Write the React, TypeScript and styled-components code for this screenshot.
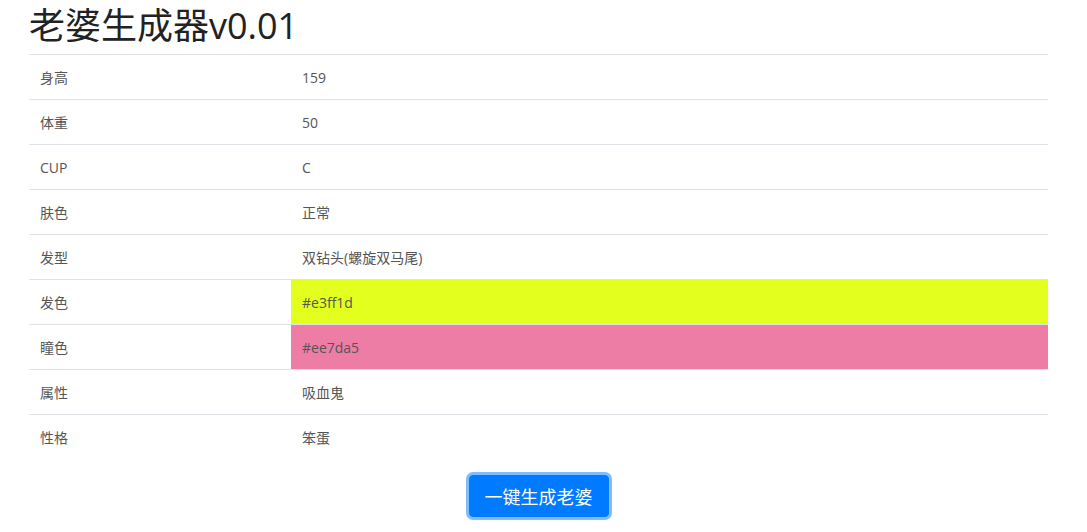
import React from "react";
import styled, { createGlobalStyle } from "styled-components";

const Global = createGlobalStyle`
  html, body { margin: 0; padding: 0; background: #fff; }
  body {
    font-family: "Open Sans", "Noto Sans CJK SC", sans-serif;
    color: #212529;
  }
`;

const Page = styled.div`
  width: 1019px;
  margin-left: 29px;
  display: flex;
  flex-direction: column;
`;

const Title = styled.h1`
  margin: 0;
  height: 54px;
  font-size: 36px;
  font-weight: 400;
  line-height: 52px;
  color: #222;
  font-family: "Open Sans", "Noto Sans CJK SC", sans-serif;
`;

const Table = styled.div`
  display: grid;
  grid-template-columns: 262px 1fr;
`;

const Cell = styled.div<{ $bg?: string }>`
  height: 45px;
  box-sizing: border-box;
  padding: 0 11px;
  display: flex;
  align-items: center;
  border-top: 1px solid #dee2e6;
  font-size: 14px;
  color: #555;
  background: ${(p) => p.$bg || "transparent"};
`;

const Footer = styled.div`
  display: flex;
  justify-content: center;
  padding-top: 13px;
`;

const Button = styled.button`
  font-family: "Noto Sans CJK SC", sans-serif;
  font-size: 18px;
  line-height: 26px;
  color: #fff;
  background: #007bff;
  border: 1px solid #007bff;
  border-radius: 4px;
  padding: 7px 15px;
  margin: 3px;
  box-shadow: 0 0 0 3px rgba(0, 123, 255, 0.5);
  cursor: pointer;
`;

const rows: { k: string; v: string; bg?: string }[] = [
  { k: "身高", v: "159" },
  { k: "体重", v: "50" },
  { k: "CUP", v: "C" },
  { k: "肤色", v: "正常" },
  { k: "发型", v: "双钻头(螺旋双马尾)" },
  { k: "发色", v: "#e3ff1d", bg: "#e3ff1d" },
  { k: "瞳色", v: "#ee7da5", bg: "#ee7da5" },
  { k: "属性", v: "吸血鬼" },
  { k: "性格", v: "笨蛋" },
];

export default function App() {
  return (
    <>
      <Global />
      <Page>
        <Title>老婆生成器v0.01</Title>
        <Table>
          {rows.map((r) => (
            <React.Fragment key={r.k}>
              <Cell>{r.k}</Cell>
              <Cell $bg={r.bg}>{r.v}</Cell>
            </React.Fragment>
          ))}
        </Table>
        <Footer>
          <Button>一键生成老婆</Button>
        </Footer>
      </Page>
    </>
  );
}
